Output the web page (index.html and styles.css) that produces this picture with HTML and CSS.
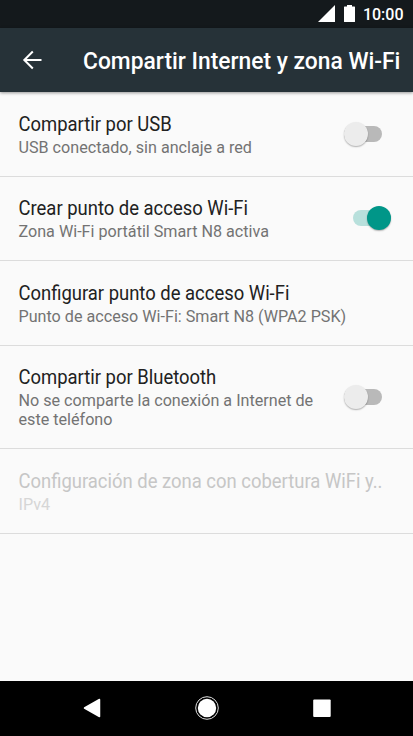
FILE: index.html
```
<!DOCTYPE html>
<html lang="es">
<head>
<meta charset="utf-8">
<title>Compartir Internet y zona Wi-Fi</title>
<link rel="stylesheet" href="styles.css">
</head>
<body>
<div class="status">
<svg class="signal" viewBox="0 0 16 16"><path d="M0 16L16 0V16Z"/></svg>
<svg class="battery" viewBox="0 0 11 17"><path d="M3 0H8V1.5H10.5Q11 1.5 11 2V16.5Q11 17 10.5 17H0.5Q0 17 0 16.5V2Q0 1.5 0.5 1.5H3Z"/></svg>
<span class="clock">10:00</span>
</div>
<header class="bar">
<svg class="back" viewBox="0 0 20 20"><path d="M19.5 10H2.5M10.8 1.5L2.3 10L10.8 18.5"/></svg>
<h1>Compartir Internet y zona Wi-Fi</h1>
</header>
<main>
<section class="row"><div class="text"><h2>Compartir por USB</h2><p>USB conectado, sin anclaje a red</p></div><i class="switch"></i></section>
<section class="row"><div class="text"><h2>Crear punto de acceso Wi-Fi</h2><p>Zona Wi-Fi portátil Smart N8 activa</p></div><i class="switch on"></i></section>
<section class="row"><div class="text"><h2>Configurar punto de acceso Wi-Fi</h2><p>Punto de acceso Wi-Fi: Smart N8 (WPA2 PSK)</p></div></section>
<section class="row tall"><div class="text"><h2>Compartir por Bluetooth</h2><p>No se comparte la conexión a Internet de<br>este teléfono</p></div><i class="switch"></i></section>
<section class="row disabled"><div class="text"><h2>Configuración de zona con cobertura WiFi y..</h2><p>IPv4</p></div></section>
</main>
<nav>
<svg viewBox="0 0 24 24"><path class="tri" d="M4.5 12L19.5 3.5V20.5Z"/></svg>
<svg viewBox="0 0 24 24"><circle cx="12" cy="12" r="9.2"/><circle class="ring" cx="12" cy="12" r="11.3"/></svg>
<svg viewBox="0 0 24 24"><rect x="3.2" y="3.5" width="17.5" height="17.5" rx="1"/></svg>
</nav>
</body>
</html>
```
FILE: styles.css
```
* { box-sizing: border-box; margin: 0; padding: 0; }
body { width: 413px; height: 736px; display: flex; flex-direction: column; overflow: hidden; background: #fafafa; font-family: Roboto, sans-serif; }
.status { height: 28px; background: #14191c; display: flex; align-items: center; justify-content: flex-end; padding: 0 9.5px 1px 0; color: #fff; fill: #fff; }
.signal { width: 17px; height: 17px; margin-right: 9px; }
.battery { width: 11px; height: 17px; margin-right: 8px; }
.clock { font-size: 16px; font-weight: 500; line-height: 18px; padding-top: 2px; }
.bar { height: 64px; flex: none; background: #263238; display: flex; align-items: center; padding-left: 22px; color: #fff; box-shadow: 0 1px 3px rgba(0,0,0,.4); position: relative; }
.back { width: 20px; height: 20px; fill: none; stroke: #fff; stroke-width: 2; margin-right: 41px; }
h1 { font-size: 22.8px; font-weight: 500; line-height: 28px; white-space: nowrap; padding-top: 3px; transform: scaleY(1.04); }
main { flex: 1; }
.row { height: 84.5px; border-bottom: 1px solid #dcdcdc; display: flex; align-items: center; justify-content: space-between; padding: 0 22px 0 18.5px; }
.tall { height: 103.5px; }
.text { white-space: nowrap; padding-top: 2px; }
h2 { font-size: 18.45px; font-weight: 400; line-height: 25px; color: #212121; transform: scaleY(1.06); }
p { font-size: 16.15px; line-height: 19px; color: #737373; }
.disabled h2 { color: #c6c6c6; }
.disabled p { color: #d6d6d6; }
.switch { width: 38px; height: 16px; border-radius: 8px; background: #b9b9b9; display: flex; align-items: center; margin-right: 9px; }
.switch::before { content: ""; width: 24px; height: 24px; flex: none; border-radius: 50%; background: #ececec; box-shadow: 0 1px 1.5px rgba(0,0,0,.3); }
.switch.on { background: #b8e0dc; justify-content: flex-end; margin-right: 0; }
.switch.on::before { background: #009688; }
nav { height: 55px; background: #000; display: flex; justify-content: center; align-items: center; gap: 91px; padding: 0 0 1px 0; }
nav svg { width: 24px; height: 24px; fill: #fff; }
.tri { stroke: #fff; stroke-width: 1.5; stroke-linejoin: round; }
.ring { fill: none; stroke: #ddd; stroke-width: 1; }
```
